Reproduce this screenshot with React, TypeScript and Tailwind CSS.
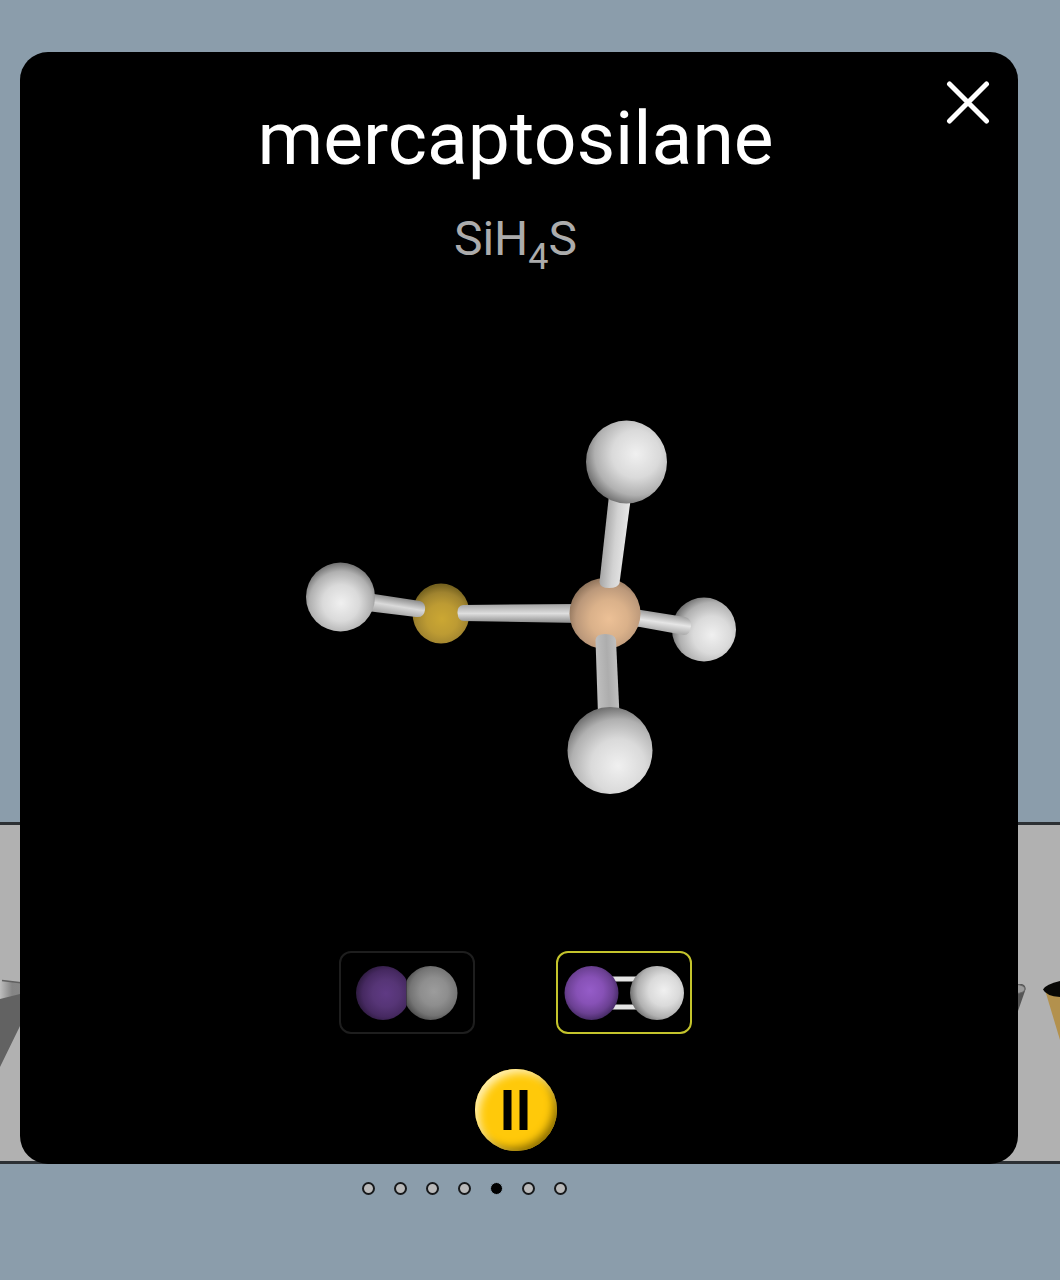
import React, { useState } from "react";

type BallProps = {
  id: string;
  cx: number;
  cy: number;
  rx: number;
  ry?: number;
  fx: number;
  fy: number;
  stops: [string, string, string, string];
};

const WHITE: [string, string, string, string] = ["#f0f0f0", "#dadada", "#b0b0b0", "#6e6e6e"];
const GOLD: [string, string, string, string] = ["#cba733", "#bd9b33", "#9f832f", "#75621f"];
const PEACH: [string, string, string, string] = ["#ecc096", "#dab18a", "#bb987a", "#8d725a"];
const PURPLE: [string, string, string, string] = ["#955cc8", "#8751b6", "#6b4092", "#452a64"];
const DIM_PURPLE: [string, string, string, string] = ["#5f3a84", "#563576", "#462961", "#2e1b40"];
const DIM_WHITE: [string, string, string, string] = ["#9c9c9c", "#8e8e8e", "#747474", "#4c4c4c"];

function Ball({ id, cx, cy, rx, ry = rx, fx, fy, stops }: BallProps) {
  return (
    <>
      <radialGradient id={id} gradientUnits="userSpaceOnUse" cx={fx} cy={fy} r={rx + Math.hypot(fx - cx, fy - cy)}>
        <stop offset="0" stopColor={stops[0]} />
        <stop offset="0.45" stopColor={stops[1]} />
        <stop offset="0.78" stopColor={stops[2]} />
        <stop offset="1" stopColor={stops[3]} />
      </radialGradient>
      <ellipse cx={cx} cy={cy} rx={rx} ry={ry} fill={`url(#${id})`} />
    </>
  );
}

type BondProps = { id: string; d: string; from: [number, number]; to: [number, number]; stops: [string, string, string] };

function Bond({ id, d, from, to, stops }: BondProps) {
  return (
    <>
      <linearGradient id={id} gradientUnits="userSpaceOnUse" x1={from[0]} y1={from[1]} x2={to[0]} y2={to[1]}>
        <stop offset="0" stopColor={stops[0]} />
        <stop offset="0.5" stopColor={stops[1]} />
        <stop offset="1" stopColor={stops[2]} />
      </linearGradient>
      <path d={d} fill={`url(#${id})`} />
    </>
  );
}

function Molecule() {
  return (
    <svg className="mt-[133px] w-[460px] max-w-full" viewBox="286 400 460 410" role="img" aria-label="Ball and stick model of mercaptosilane">
      <Ball id="sulfur" cx={441} cy={613.5} rx={28.5} ry={30} fx={442} fy={619} stops={GOLD} />
      <Bond id="b1" d="M365 592 L374 594 L420 601 Q426 603 425 610 Q424 618 416 617 L375 612 L360 610 Z" from={[397, 597]} to={[394, 615]} stops={["#8a8a8a", "#dadada", "#a5a5a5"]} />
      <Ball id="h1" cx={340.5} cy={597} rx={34.5} fx={341} fy={603} stops={WHITE} />
      <Bond id="b2" d="M580 604 L463 605 Q457 606 457.500 613 Q458 621 464 621 L580 623 Z" from={[515, 604]} to={[515, 623]} stops={["#a2a2a2", "#dedede", "#8c8c8c"]} />
      <Ball id="h3" cx={704} cy={629.5} rx={32} fx={712} fy={635} stops={WHITE} />
      <Bond id="b4" d="M630 608 L641 610 L685 617 Q692 619 691 626 Q690 635 684 635 L640 627 L630 626 Z" from={[664, 612]} to={[661, 633]} stops={["#909090", "#e6e6e6", "#a2a2a2"]} />
      <Ball id="silicon" cx={605} cy={613.5} rx={35.5} fx={609} fy={619} stops={PEACH} />
      <Bond id="b5" d="M609 495 L599.500 582 Q600 588 609 588 Q618 588 619.500 583 L631 497 Z" from={[604, 542]} to={[626, 544]} stops={["#a9a9a9", "#d2d2d2", "#e6e6e6"]} />
      <Bond id="b6" d="M595.500 640 Q596 634 605 634 Q615 634 616 640 L619.500 715 L598 715 Z" from={[597, 675]} to={[619, 674]} stops={["#bebebe", "#adadad", "#c2c2c2"]} />
      <Ball id="h2" cx={626.5} cy={462} rx={40.5} ry={41.5} fx={636} fy={454} stops={WHITE} />
      <Ball id="h4" cx={610} cy={750.5} rx={42.5} ry={43.5} fx={618} fy={766} stops={WHITE} />
    </svg>
  );
}

function SpaceFillIcon() {
  return (
    <svg className="h-14 w-32 shrink-0" viewBox="343 964.5 128 56" aria-hidden="true">
      <clipPath id="leftHalf"><rect x="343" y="960" width="63.5" height="66" /></clipPath>
      <clipPath id="rightHalf"><rect x="406.5" y="960" width="70" height="66" /></clipPath>
      <g clipPath="url(#leftHalf)">
        <Ball id="sp" cx={383} cy={992.5} rx={27} fx={386} fy={993} stops={DIM_PURPLE} />
      </g>
      <g clipPath="url(#rightHalf)">
        <Ball id="sw" cx={430.5} cy={992.5} rx={27} fx={434} fy={991} stops={DIM_WHITE} />
      </g>
    </svg>
  );
}

function BallStickIcon() {
  return (
    <svg className="h-14 w-32 shrink-0" viewBox="560 964.5 128 56" aria-hidden="true">
      <path d="M608 978.500H645M608 1006.500H645" stroke="#e4e4e4" strokeWidth="5" />
      <Ball id="bp" cx={591.5} cy={992.5} rx={27} fx={590} fy={990} stops={PURPLE} />
      <Ball id="bw" cx={657} cy={992.5} rx={27} fx={664} fy={990} stops={WHITE} />
    </svg>
  );
}

function Backdrop({ page, onPage }: { page: number; onPage: (n: number) => void }) {
  return (
    <div className="col-start-1 row-start-1 flex flex-col bg-[#8b9dab]">
      <div className="mt-[822px] flex h-[342px] justify-between border-y-3 border-[#2c3034] bg-[#b1b1b1]">
        <svg className="mt-[145px] h-[110px] w-10" viewBox="0 970 40 110" aria-hidden="true">
          <linearGradient id="rim" x1="0" x2="1">
            <stop offset="0" stopColor="#bdbdbd" />
            <stop offset="0.300" stopColor="#858585" />
            <stop offset="1" stopColor="#8a8a8a" />
          </linearGradient>
          <path d="M2 980 L40 986 V996 L0 1000 V980Z" fill="url(#rim)" />
          <path d="M2 980.500 L40 985" stroke="#606060" strokeWidth="1.500" />
          <path d="M0 999 L20 994 H40 V1000 L20 1026 L0 1067Z" fill="#626262" />
        </svg>
        <svg className="mt-[145px] h-[110px] w-[60px]" viewBox="1000 970 60 110" aria-hidden="true">
          <path d="M1000 984 H1022 Q1027 986 1025 991 L1018 1011 H1000Z" fill="#565656" />
          <ellipse cx="1016" cy="989" rx="9" ry="4.500" fill="#9b9b9b" stroke="#666" />
          <path d="M1045 990 L1060 1040 V990Z" fill="#b3914d" />
          <path d="M1043 989.500 Q1046 984 1060 981 V997 Q1046 996 1043 989.500Z" fill="#080806" />
        </svg>
      </div>
      <nav className="mt-[18px] flex items-center justify-center gap-[19px] pr-[131px]" aria-label="Kit pages">
        {[0, 1, 2, 3, 4, 5, 6].map((n) => (
          <button
            key={n}
            type="button"
            aria-label={`Page ${n + 1}`}
            aria-current={page === n}
            onClick={() => onPage(n)}
            className={
              page === n
                ? "size-[13px] rounded-full border border-[#8b9dab] bg-black"
                : "size-[13px] rounded-full border-2 border-[#17191b] bg-[#b9b9b9]"
            }
          />
        ))}
      </nav>
    </div>
  );
}

export default function App() {
  const [page, setPage] = useState(4);
  const [view, setView] = useState("stick");
  const [playing, setPlaying] = useState(true);
  const base = "flex h-[83px] w-[136px] items-center justify-center rounded-xl border-2 ";

  return (
    <div className="grid min-h-screen grid-cols-1 font-[Roboto,sans-serif]">
      <Backdrop page={page} onPage={setPage} />
      <main
        role="dialog"
        aria-labelledby="molecule-name"
        className="relative col-start-1 row-start-1 mt-[52px] mr-[42px] ml-5 flex flex-col items-center self-start rounded-[28px] bg-black pr-[7px] pb-[13px]"
      >
        <header className="grid w-full grid-cols-1">
          <h1 id="molecule-name" className="col-start-1 row-start-1 mt-[42px] text-center text-[75px] leading-[88px] text-white">
            mercaptosilane
          </h1>
          <button
            type="button"
            aria-label="Close"
            className="relative col-start-1 row-start-1 mt-7 mr-[21px] size-11 self-start justify-self-end"
          >
            <svg viewBox="0 0 44 44" aria-hidden="true">
              <path d="M3.500 4 L40.500 41 M40.500 4 L3.500 41" stroke="#fff" strokeWidth="5" strokeLinecap="round" />
            </svg>
          </button>
        </header>
        <p className="mt-[29px] h-14 text-[48px] leading-[56px] text-[#acacac]">
          SiH<sub className="bottom-[-14px] text-[36px] leading-none">4</sub>S
        </p>
        <Molecule />
        <div className="mt-[141px] flex gap-[81px]" role="group" aria-label="View style">
          <button
            type="button"
            aria-label="Space fill"
            aria-pressed={view === "fill"}
            onClick={() => setView("fill")}
            className={base + (view === "fill" ? "border-[#c4c42c]" : "border-[#1e1e1e]")}
          >
            <SpaceFillIcon />
          </button>
          <button
            type="button"
            aria-label="Ball and stick"
            aria-pressed={view === "stick"}
            onClick={() => setView("stick")}
            className={base + (view === "stick" ? "border-[#c4c42c]" : "border-[#1e1e1e]")}
          >
            <BallStickIcon />
          </button>
        </div>
        <button
          type="button"
          aria-label={playing ? "Pause" : "Play"}
          onClick={() => setPlaying(!playing)}
          className="mt-[35px] size-[82px] rounded-full bg-[#ffc90a] shadow-[inset_5px_5px_8px_-1px_#fff0b4,inset_-5px_-5px_9px_-2px_#8a6c00]"
        >
          <svg viewBox="0 0 82 82" aria-hidden="true">
            {playing ? <path d="M28.500 21H36.500V61H28.500ZM44.500 21H52.500V61H44.500Z" /> : <path d="M30 21L60 41L30 61Z" />}
          </svg>
        </button>
      </main>
    </div>
  );
}
